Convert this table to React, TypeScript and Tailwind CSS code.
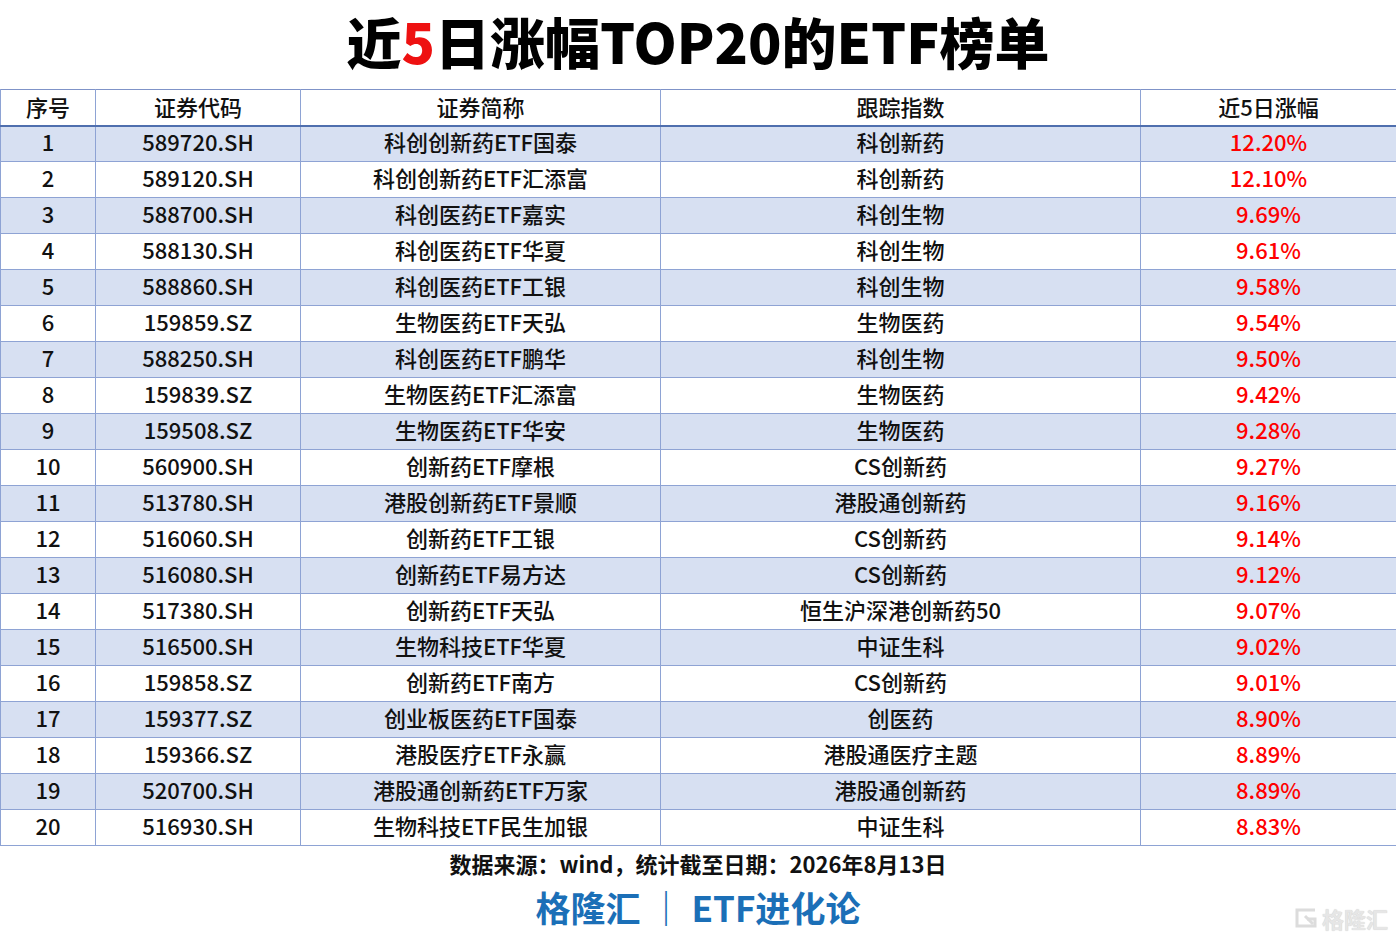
const rows: [string, string, string, string, string][] = [
  ["1", "589720.SH", "科创创新药ETF国泰", "科创新药", "12.20%"],
  ["2", "589120.SH", "科创创新药ETF汇添富", "科创新药", "12.10%"],
  ["3", "588700.SH", "科创医药ETF嘉实", "科创生物", "9.69%"],
  ["4", "588130.SH", "科创医药ETF华夏", "科创生物", "9.61%"],
  ["5", "588860.SH", "科创医药ETF工银", "科创生物", "9.58%"],
  ["6", "159859.SZ", "生物医药ETF天弘", "生物医药", "9.54%"],
  ["7", "588250.SH", "科创医药ETF鹏华", "科创生物", "9.50%"],
  ["8", "159839.SZ", "生物医药ETF汇添富", "生物医药", "9.42%"],
  ["9", "159508.SZ", "生物医药ETF华安", "生物医药", "9.28%"],
  ["10", "560900.SH", "创新药ETF摩根", "CS创新药", "9.27%"],
  ["11", "513780.SH", "港股创新药ETF景顺", "港股通创新药", "9.16%"],
  ["12", "516060.SH", "创新药ETF工银", "CS创新药", "9.14%"],
  ["13", "516080.SH", "创新药ETF易方达", "CS创新药", "9.12%"],
  ["14", "517380.SH", "创新药ETF天弘", "恒生沪深港创新药50", "9.07%"],
  ["15", "516500.SH", "生物科技ETF华夏", "中证生科", "9.02%"],
  ["16", "159858.SZ", "创新药ETF南方", "CS创新药", "9.01%"],
  ["17", "159377.SZ", "创业板医药ETF国泰", "创医药", "8.90%"],
  ["18", "159366.SZ", "港股医疗ETF永赢", "港股通医疗主题", "8.89%"],
  ["19", "520700.SH", "港股通创新药ETF万家", "港股通创新药", "8.89%"],
  ["20", "516930.SH", "生物科技ETF民生加银", "中证生科", "8.83%"],
];

const font = { fontFamily: '"Noto Sans CJK SC", "Noto Sans", sans-serif' };

export default function App() {
  return (
    <div className="relative w-[1396px] h-[941px] bg-white text-[#111]" style={font}>
      {/* Title */}
      <div className="h-[89px] flex items-center justify-center pb-[8px]">
        <h1 className="text-[55px] font-black leading-none text-black">
          近<span className="text-[#ee1111]">5</span>日涨幅TOP20的ETF榜单
        </h1>
      </div>

      {/* Table */}
      <table className="w-[1396px] border-collapse table-fixed text-[22px] font-medium">
        <colgroup>
          <col className="w-[95px]" />
          <col className="w-[205px]" />
          <col className="w-[360px]" />
          <col className="w-[480px]" />
          <col className="w-[256px]" />
        </colgroup>
        <thead>
          <tr className="h-[36px] border-t border-t-[#7f93c8] border-b-2 border-b-[#4f6fae]">
            {["序号", "证券代码", "证券简称", "跟踪指数", "近5日涨幅"].map((h) => (
              <th
                key={h}
                className="font-medium text-center border-x border-[#8ea3d4] p-0 pb-[3px] leading-none"
              >
                {h}
              </th>
            ))}
          </tr>
        </thead>
        <tbody>
          {rows.map((r, i) => (
            <tr
              key={r[0]}
              className={`h-[36px] border-b border-[#8ea3d4] ${i % 2 === 0 ? "bg-[#d7e0f2]" : "bg-white"}`}
            >
              <td className="text-center border-x border-[#8ea3d4] p-0 pb-[5px] leading-none">{r[0]}</td>
              <td className="text-center border-x border-[#8ea3d4] p-0 pb-[5px] leading-none">{r[1]}</td>
              <td className="text-center border-x border-[#8ea3d4] p-0 pb-[5px] leading-none">{r[2]}</td>
              <td className="text-center border-x border-[#8ea3d4] p-0 pb-[5px] leading-none">{r[3]}</td>
              <td className="text-center border-x border-[#8ea3d4] p-0 pb-[5px] leading-none text-[#ff0000]">
                {r[4]}
              </td>
            </tr>
          ))}
        </tbody>
      </table>

      {/* Source */}
      <p className="text-center text-[22px] font-bold leading-none mt-[6px] text-[#111]">
        数据来源：wind，统计截至日期：2026年8月13日
      </p>

      {/* Brand */}
      <p className="text-center text-[35px] font-bold leading-none mt-[15px] text-[#1b6fb7]">
        格隆汇 ｜ ETF进化论
      </p>

      {/* Watermark */}
      <div className="absolute right-[8px] bottom-[11px] flex items-center gap-[3px] text-[#e6e6e6] [text-shadow:0_0_1px_#c4c4c4]">
        <svg width="26" height="24" viewBox="0 0 26 24" fill="none" stroke="#dcdcdc" strokeWidth="3">
          <path d="M22 4H4v16h18v-7h-8" />
          <path d="M12 10l8 8" />
        </svg>
        <span className="text-[22px] font-bold leading-none">格隆汇</span>
      </div>
    </div>
  );
}
